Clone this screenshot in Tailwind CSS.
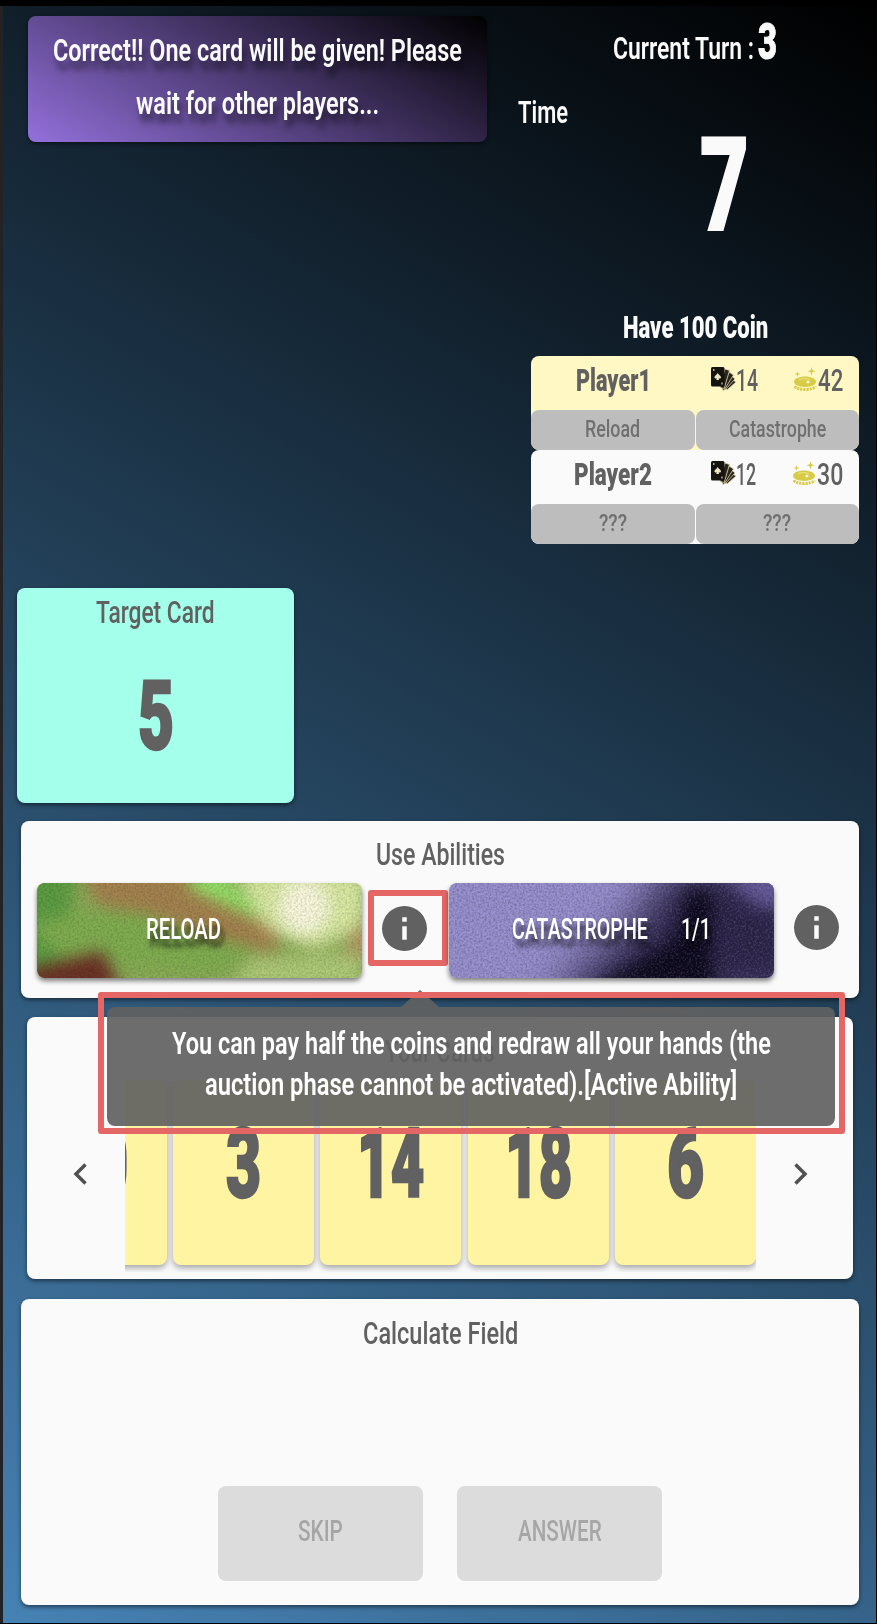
<!DOCTYPE html>
<html lang="en">
<head>
<meta charset="utf-8">
<title>Card Game</title>
<script src="https://cdn.jsdelivr.net/npm/@tailwindcss/browser@4"></script>
</head>
<body class="relative w-[877px] h-[1624px] overflow-hidden bg-black pt-[6px] font-[Roboto,sans-serif] font-medium text-[#616161]">
<svg class="hidden">
  <symbol id="info" viewBox="2 2 20 20"><path fill="currentColor" d="M12 2a10 10 0 1 0 0 20 10 10 0 0 0 0-20zm1 15h-2v-6h2v6zm0-8h-2V7h2v2z"/></symbol>
  <symbol id="cards" viewBox="0 0 25 25">
    <g fill="#2a261c" stroke="#e0d8b0" stroke-width=".8">
      <path d="M12 18L20 12l5 3-9 8z"/>
      <path d="M11 19L20 8.500l4 3.500L14 23z"/>
      <path d="M10 20L18 5l4.500 3L12.500 24z"/>
      <path d="M9 20L14 2l4.500 1.500L13 22z"/>
    </g>
    <rect x="0" y="0" width="13.500" height="19.500" rx="1.500" fill="#15130f"/>
    <path d="M6.700 6c.8 1.800 3.300 2.600 3.300 4.300 0 1.300-1.700 1.700-2.500.9l.7 1.800H5.200l.7-1.800c-.8.800-2.500.4-2.500-.9 0-1.700 2.500-2.500 3.300-4.300z" fill="#ece4c4"/>
    <path d="M2 2h1.500v2H2zM10.200 15.500h1.500v2h-1.500z" fill="#b5ac86"/>
  </symbol>
  <symbol id="coins" viewBox="0 0 24 26">
    <path fill="#d8cb48" d="M11 9.500c6.200 0 11 2.300 11 5.200s-4.800 5.200-11 5.200S0 17.600 0 14.700s4.800-5.200 11-5.200z"/>
    <path d="M5 13c2-1.600 8-2 11-.3" fill="none" stroke="#f0e88e" stroke-width=".9"/>
    <path fill="#fff" d="M14 13l.7 1.500 2 .4-2 .5L14 17l-.7-1.600-2-.5 2-.4z"/>
    <path d="M.8 19.300c3 4.300 18 4.300 20.700 0" fill="none" stroke="#d8cb48" stroke-width="3" stroke-dasharray="2.200 .9"/>
    <path fill="#d8cb48" d="M17.500 0l.9 3.200 3 1-3 1-.9 3.300-.9-3.300-3-1 3-1zM3.500 4l.6 2.300 2.400.7-2.400.7L3.500 10l-.6-2.300L.5 7l2.400-.7z"/>
  </symbol>
  <filter id="grain" x="0" y="0" width="100%" height="100%"><feTurbulence type="fractalNoise" baseFrequency=".47" numOctaves="2" seed="4"/><feColorMatrix values="0 0 0 0 0  0 0 0 0 0  0 0 0 0 0  1.800 0 0 0 -.65"/></filter>
  <filter id="grainLight" x="0" y="0" width="100%" height="100%"><feTurbulence type="fractalNoise" baseFrequency=".47" numOctaves="2" seed="9"/><feColorMatrix values="0 0 0 0 .65  0 0 0 0 .6  0 0 0 0 .85  3 0 0 0 -1.400"/></filter>
  <filter id="soft" x="-50%" y="-50%" width="200%" height="200%"><feGaussianBlur stdDeviation="8"/></filter>
  <filter id="softer" x="-50%" y="-50%" width="200%" height="200%"><feGaussianBlur stdDeviation="22"/></filter>
</svg>

<main class="h-[1617px] w-[876px] border-l-3 border-[#232326] bg-[linear-gradient(30deg,#4682b4,#000)]">
  <section class="flex h-[582px]">
    <div class="w-[515px] shrink-0 pl-[25px] pt-[10px]">
      <div class="flex h-[126px] w-[459px] flex-col items-center rounded-lg bg-[linear-gradient(30deg,#9370db,#000)] pt-[8px] text-[31px] leading-[53px] font-semibold text-[#fafafa] shadow-[0_2px_4px_rgba(0,0,0,.5)] [text-shadow:4px_9px_7px_rgba(0,0,0,.5)]">
        <span data-fit class="block w-[409px]">Correct!! One card will be given! Please</span>
        <span data-fit class="block w-[243px]">wait for other players...</span>
      </div>
    </div>
    <div class="w-[341px] pt-[11px] text-[#fafafa]">
      <div class="flex h-[50px] items-baseline gap-[4px] pl-[95px] text-[32px] font-semibold leading-[50px]">
        <span data-fit class="block w-[141px]">Current Turn :</span>
        <span data-fit class="block w-[19px] text-[50px] font-black [-webkit-text-stroke:1px]">3</span>
      </div>
      <div class="mt-[25px] text-[32px] font-semibold leading-[41px]"><span data-fit class="block w-[50px]">Time</span></div>
      <div class="-mt-[13px] pl-[182px] text-[129px] font-black leading-[132px] [-webkit-text-stroke:2px]"><span data-fit class="block w-[49px]">7</span></div>
      <div class="ml-[13px] mt-[54px] w-[328px]">
        <div class="flex h-[40px] justify-center text-[32px] font-black leading-[42px]"><span data-fit class="block w-[145px]">Have 100 Coin</span></div>
        <div class="mt-[10px] flex flex-col text-[#616161]">
          <div class="h-[94px] overflow-hidden rounded-lg bg-[#fff7c4]">
            <div class="flex h-[54px] items-start pt-[4px] text-[32px] leading-[41px]">
              <div class="flex w-[164px] justify-center font-black"><span data-fit class="block w-[75px]">Player1</span></div>
              <div class="flex w-[99px] pl-[16px]"><svg class="mt-[7px] h-[25px] w-[25px]"><use href="#cards"/></svg><span data-fit class="block w-[22px]">14</span></div>
              <div class="flex"><svg class="mt-[7px] h-[26px] w-[24px]"><use href="#coins"/></svg><span data-fit class="block w-[25px]">42</span></div>
            </div>
            <div class="grid h-[40px] grid-cols-2 gap-px text-[24px] leading-[39px] text-[#707070]">
              <div class="flex justify-center rounded-lg bg-[#bdbdbd]"><span data-fit class="block w-[55px]">Reload</span></div>
              <div class="flex justify-center rounded-lg bg-[#bdbdbd]"><span data-fit class="block w-[97px]">Catastrophe</span></div>
            </div>
          </div>
          <div class="h-[94px] overflow-hidden rounded-lg bg-[#fafafa]">
            <div class="flex h-[54px] items-start pt-[4px] text-[32px] leading-[41px]">
              <div class="flex w-[164px] justify-center font-black"><span data-fit class="block w-[78px]">Player2</span></div>
              <div class="flex w-[98px] pl-[16px]"><svg class="mt-[7px] h-[25px] w-[25px]"><use href="#cards"/></svg><span data-fit class="block w-[20px]">12</span></div>
              <div class="flex"><svg class="mt-[7px] h-[26px] w-[24px]"><use href="#coins"/></svg><span data-fit class="block w-[26px]">30</span></div>
            </div>
            <div class="grid h-[40px] grid-cols-2 gap-px text-[24px] leading-[39px] text-[#707070]">
              <div class="flex justify-center rounded-lg bg-[#bdbdbd]"><span data-fit class="block w-[28px]">???</span></div>
              <div class="flex justify-center rounded-lg bg-[#bdbdbd]"><span data-fit class="block w-[28px]">???</span></div>
            </div>
          </div>
        </div>
      </div>
    </div>
  </section>

  <section class="ml-[14px] flex h-[215px] w-[277px] flex-col items-center rounded-lg bg-[#a4ffeb] shadow-[0_2px_4px_rgba(0,0,0,.5)]">
    <h2 class="text-[31px] font-medium leading-[49px]"><span data-fit class="block w-[119px]">Target Card</span></h2>
    <div class="mt-[29px] text-[97px] font-black leading-[100px] [-webkit-text-stroke:2.5px]"><span data-fit class="block w-[36px]">5</span></div>
  </section>

  <section class="ml-[18px] mt-[18px] h-[177px] w-[838px] rounded-lg bg-[#fafafa] shadow-[0_2px_4px_rgba(0,0,0,.5)]">
    <h2 class="flex h-[62px] justify-center text-[31px] font-medium leading-[67px]"><span data-fit class="block w-[129px]">Use Abilities</span></h2>
    <div class="flex h-[95px] items-start pl-[16px]">
      <button class="relative h-[95px] w-[325px] overflow-hidden rounded-lg shadow-[0_3px_5px_rgba(0,0,0,.5)]">
        <svg class="absolute inset-0 h-full w-full" viewBox="0 0 325 95">
          <rect width="325" height="95" fill="#8cac58"/>
          <g filter="url(#soft)">
            <path d="M-20-20h60L25 95h-50z" fill="#5c9c42"/>
            <path d="M40-15h115l85 62 0 22-50-5-40-18-90-25z" fill="#a4824f"/>
            <path d="M-10 42l60-14 50 0 60 22 60 15-40 25-150-10z" fill="#80ad50"/>
            <path d="M-10 86l76-18 20 42H-10z" fill="#6c3226"/>
            <path d="M152-10l30 0 45 45-10 0-65-30z" fill="#95e569"/>
            <path d="M198-10h130v55l-50 20-50-20z" fill="#d8e9a2"/>
            <path d="M325 35l15 35-35 5z" fill="#b59260"/>
            <path d="M215 75l110-5v35H190z" fill="#afca78"/>
          </g>
          <ellipse cx="267" cy="24" rx="25" ry="28" fill="#f9f8de" filter="url(#soft)"/>
          <rect width="325" height="95" filter="url(#grain)" opacity=".18"/>
        </svg>
        <span class="relative -top-[2px] flex pl-[109px] text-[30px] font-medium leading-[91px] text-white [text-shadow:5px_8px_7px_rgba(0,0,0,.7)]"><span data-fit class="block w-[75px] text-left">RELOAD</span></span>
      </button>
      <div class="ml-[6px] mt-[7px] flex h-[76px] w-[80px] items-center justify-center rounded-[3px] border-6 border-[#e46766]"><svg class="-ml-[7px] h-[45px] w-[45px]"><use href="#info"/></svg></div>
      <button class="relative ml-px h-[95px] w-[325px] overflow-hidden rounded-lg shadow-[0_3px_5px_rgba(0,0,0,.5)]">
        <svg class="absolute inset-0 h-full w-full" viewBox="0 0 325 95">
          <rect width="325" height="95" fill="#9a91d0"/>
          <g filter="url(#softer)"><path d="M220-20h150v140H95l40-35 50-45z" fill="#2c2549"/></g>
          <g filter="url(#soft)"><path d="M240 5l25 5-5 60 10 40-135-5 45-22 45-25z" fill="#050310" opacity=".8"/><path d="M275-10h70v40l-40-8z" fill="#6d61a3" opacity=".85"/></g>
          <rect width="325" height="95" filter="url(#grain)" opacity=".26"/>
          <rect x="140" width="185" height="95" filter="url(#grainLight)" opacity=".22"/>
        </svg>
        <span class="relative -top-[2px] flex gap-[33px] pl-[63px] text-[30px] font-medium leading-[91px] text-white [text-shadow:5px_8px_7px_rgba(0,0,0,.7)]"><span data-fit class="block w-[136px] text-left">CATASTROPHE</span><span data-fit class="block w-[30px] text-left">1/1</span></span>
      </button>
      <svg class="ml-[20px] mt-[22px] h-[45px] w-[45px]"><use href="#info"/></svg>
    </div>
  </section>

  <section class="ml-[24px] mt-[19px] h-[262px] w-[826px] rounded-lg bg-[#fafafa] shadow-[0_2px_4px_rgba(0,0,0,.5)]">
    <h2 class="flex h-[63px] justify-center text-[31px] font-medium leading-[69px]"><span data-fit class="block w-[110px]">Your Cards</span></h2>
    <div class="flex h-[192px]">
      <div class="w-[98px] pl-[46px] pt-[83px]"><svg class="h-[22px] w-[14px]" viewBox="0 0 14 22" fill="none" stroke="#505050" stroke-width="3.500"><path d="M12.500 1.500L3 11l9.500 9.500"/></svg></div>
      <div class="flex w-[631px] justify-end gap-[6.300px] overflow-hidden text-[97px] font-black leading-[168px] [-webkit-text-stroke:2.5px]">
        <div class="flex h-[185px] w-[141px] shrink-0 justify-center rounded-lg bg-[#fff4a2] shadow-[0_3px_6px_rgba(0,0,0,.35)]"><span data-fit class="block w-[63px]">10</span></div>
        <div class="flex h-[185px] w-[141px] shrink-0 justify-center rounded-lg bg-[#fff4a2] shadow-[0_3px_6px_rgba(0,0,0,.35)]"><span data-fit class="block w-[35px]">3</span></div>
        <div class="flex h-[185px] w-[141px] shrink-0 justify-center rounded-lg bg-[#fff4a2] shadow-[0_3px_6px_rgba(0,0,0,.35)]"><span data-fit class="block w-[67px]">14</span></div>
        <div class="flex h-[185px] w-[141px] shrink-0 justify-center rounded-lg bg-[#fff4a2] shadow-[0_3px_6px_rgba(0,0,0,.35)]"><span data-fit class="block w-[67px]">18</span></div>
        <div class="flex h-[185px] w-[141px] shrink-0 justify-center rounded-lg bg-[#fff4a2] shadow-[0_3px_6px_rgba(0,0,0,.35)]"><span data-fit class="block w-[37px]">6</span></div>
      </div>
      <div class="pl-[38px] pt-[83px]"><svg class="h-[22px] w-[14px]" viewBox="0 0 14 22" fill="none" stroke="#505050" stroke-width="3.500"><path d="M1.500 1.500L11 11l-9.500 9.500"/></svg></div>
    </div>
  </section>

  <section class="ml-[18px] mt-[20px] h-[306px] w-[838px] rounded-lg bg-[#fafafa] shadow-[0_2px_4px_rgba(0,0,0,.5)]">
    <h2 class="flex h-[70px] justify-center text-[31px] font-medium leading-[70px]"><span data-fit class="block w-[155px]">Calculate Field</span></h2>
    <div class="mt-[117px] flex justify-center gap-[34px] text-[30px] font-medium leading-[89px] text-[#a6a6a6]">
      <button class="flex h-[95px] w-[205px] justify-center rounded-lg bg-[#dcdcdc]"><span data-fit class="block w-[45px] text-left">SKIP</span></button>
      <button class="flex h-[95px] w-[205px] justify-center rounded-lg bg-[#dcdcdc]"><span data-fit class="block w-[84px] text-left">ANSWER</span></button>
    </div>
  </section>
</main>

<!-- Ability tooltip with its highlight frame -->
<div class="absolute left-[107px] top-[1007px] flex h-[119px] w-[728px] flex-col items-center rounded-lg bg-[#616161]/92 pt-[16px] text-[31px] font-semibold leading-[41px] text-white">
  <div class="absolute -top-[17px] left-[294px] h-[17px] w-[38px] bg-[#616161]/92 [clip-path:polygon(50%_0,100%_100%,0_100%)]"></div>
  <span data-fit class="block w-[599px]">You can pay half the coins and redraw all your hands (the</span>
  <span data-fit class="block w-[532px]">auction phase cannot be activated).[Active Ability]</span>
</div>
<div class="absolute left-[98px] top-[992px] h-[142px] w-[747px] rounded-[3px] border-6 border-[#e46766]"></div>

<script>
// Condense each label horizontally so that it fills its slot.
document.querySelectorAll('[data-fit]').forEach(function (slot) {
  var inner = document.createElement('span');
  inner.style.display = 'inline-block';
  inner.style.whiteSpace = 'nowrap';
  inner.style.transformOrigin = 'left';
  inner.textContent = slot.textContent;
  slot.textContent = '';
  slot.style.flexShrink = 0;
  slot.style.whiteSpace = 'nowrap';
  slot.appendChild(inner);
  function fit() {
    if (slot.clientWidth && inner.offsetWidth) {
      inner.style.transform = 'scaleX(' + slot.clientWidth / inner.offsetWidth + ')';
    }
  }
  var watcher = new ResizeObserver(fit);
  watcher.observe(slot);
  watcher.observe(inner);
  addEventListener('load', fit);
  fit();
});
</script>
</body>
</html>
